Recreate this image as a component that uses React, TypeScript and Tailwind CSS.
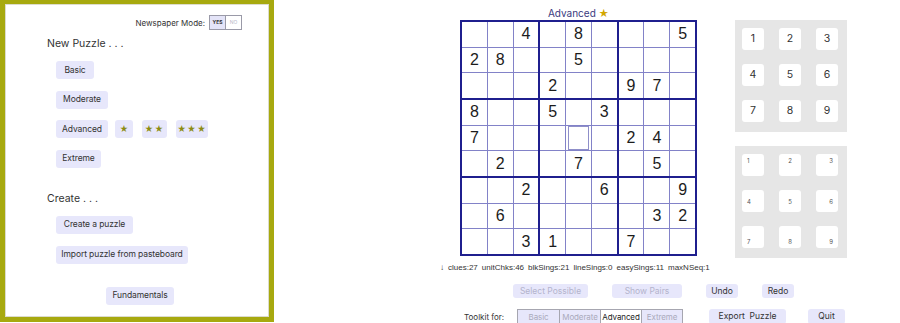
import React from "react";

const FONT = { fontFamily: "Inter, 'Liberation Sans', sans-serif" };
const ARIAL = { fontFamily: "'Liberation Sans', Arial, sans-serif" };

const PUZZLE: string[] = [
  "..4.8...5",
  "28..5....",
  "...2..97.",
  "8..5.3...",
  "7.....24.",
  ".2..7..5.",
  "..2..6..9",
  ".6.....32",
  "..31..7..",
];

const SEL_ROW = 4;
const SEL_COL = 4;

function PillButton({ w, children, dim = false }: { w: string; children: React.ReactNode; dim?: boolean }) {
  return (
    <div
      className={`${w} h-[18px] shrink-0 rounded-[3px] bg-[#e7e7fb] flex items-center justify-center whitespace-nowrap text-[8.5px] tracking-[-0.1px] ${
        dim ? "text-[#b3b3c9]" : "text-[#333]"
      }`}
    >
      {children}
    </div>
  );
}

function LeftPanel() {
  return (
    <div className="w-[274px] h-[322px] shrink-0 border-[5px] border-t-4 border-[#a7a90f] bg-white shadow-[inset_0_0_0_1px_#dcdccc] flex flex-col">
      <div className="flex justify-end items-center pr-[27px] mt-[11px] gap-[4px]">
        <span className="text-[8px] text-[#333]">Newspaper Mode:</span>
        <div className="flex h-[15px] border border-[#9a9aa8]">
          <div className="w-[16px] bg-[#e4e4f8] border-r border-[#9a9aa8] flex items-center justify-center text-[5px] font-bold text-[#333]">YES</div>
          <div className="w-[15px] bg-white flex items-center justify-center text-[5px] text-[#b8b8c8]">NO</div>
        </div>
      </div>

      <div className="pl-[42px] mt-[7px] text-[10.5px] leading-[13px] text-[#333]">New Puzzle . . .</div>

      <div className="pl-[51px] mt-[11px] flex flex-col gap-[11.5px]">
        <PillButton w="w-[38px]">Basic</PillButton>
        <PillButton w="w-[52px]">Moderate</PillButton>
        <div className="flex">
          <PillButton w="w-[52px]">Advanced</PillButton>
          <div className="ml-[7px]">
            <PillButton w="w-[18px]"><span className="text-[#8c8c12]">★</span></PillButton>
          </div>
          <div className="ml-[9px]">
            <PillButton w="w-[25px]"><span className="text-[#8c8c12] tracking-[1px]">★★</span></PillButton>
          </div>
          <div className="ml-[9px]">
            <PillButton w="w-[32px]"><span className="text-[#8c8c12] tracking-[1px]">★★★</span></PillButton>
          </div>
        </div>
        <PillButton w="w-[45px]">Extreme</PillButton>
      </div>

      <div className="pl-[42px] mt-[24px] text-[10.5px] leading-[13px] text-[#333]">Create . . .</div>

      <div className="pl-[51px] mt-[11px] flex flex-col gap-[12px]">
        <PillButton w="w-[77px]">Create a puzzle</PillButton>
        <PillButton w="w-[132px]">Import puzzle from pasteboard</PillButton>
      </div>

      <div className="pl-[101px] mt-[23px]">
        <PillButton w="w-[68px]">Fundamentals</PillButton>
      </div>
    </div>
  );
}

function SudokuGrid() {
  const boxes = Array.from({ length: 9 }, (_, b) => b);
  return (
    <div className="w-[237px] h-[236px] bg-[#1f1f8e] p-[2px] grid grid-cols-3 grid-rows-3 gap-[2px]">
      {boxes.map((b) => {
        const br = Math.floor(b / 3);
        const bc = b % 3;
        return (
          <div key={b} className="bg-[#8282c8] grid grid-cols-3 grid-rows-3 gap-px">
            {Array.from({ length: 9 }, (_, i) => {
              const r = br * 3 + Math.floor(i / 3);
              const c = bc * 3 + (i % 3);
              const ch = PUZZLE[r][c];
              const sel = r === SEL_ROW && c === SEL_COL;
              return (
                <div
                  key={i}
                  className="bg-white flex items-center justify-center text-[16px] text-[#1c1c1c]"
                  style={ARIAL}
                >
                  {sel ? (
                    <div className="w-full h-full m-[2px] border border-[#8f8fc9]" />
                  ) : ch !== "." ? (
                    ch
                  ) : null}
                </div>
              );
            })}
          </div>
        );
      })}
    </div>
  );
}

const CORNER_POS = [
  "items-start justify-start",
  "items-start justify-center",
  "items-start justify-end",
  "items-center justify-start",
  "items-center justify-center",
  "items-center justify-end",
  "items-end justify-start",
  "items-end justify-center",
  "items-end justify-end",
];

function Keypad({ small = false }: { small?: boolean }) {
  return (
    <div className="w-[112px] h-[112px] bg-[#e6e6e6] pl-[7px] pt-[8px] grid grid-cols-[22px_22px_22px] grid-rows-[22px_22px_22px] gap-x-[15px] gap-y-[14px]">
      {[1, 2, 3, 4, 5, 6, 7, 8, 9].map((n) => (
        <div
          key={n}
          className={`bg-white rounded-[3px] flex ${
            small ? `${CORNER_POS[n - 1]} px-[5px] py-[2px] text-[6px] text-[#555]` : "items-center justify-center text-[10.5px] text-[#333]"
          }`}
        >
          {n}
        </div>
      ))}
    </div>
  );
}

function SmallButton({ w, children, dim = false }: { w: string; children: React.ReactNode; dim?: boolean }) {
  return (
    <div
      className={`${w} h-[14px] shrink-0 rounded-[3px] bg-[#e7e7fb] flex items-center justify-center whitespace-nowrap text-[8.5px] ${
        dim ? "text-[#b4b4cc]" : "text-[#333]"
      }`}
    >
      {children}
    </div>
  );
}

function Workspace() {
  const stats = ["clues:27", "unitChks:46", "blkSings:21", "lineSings:0", "easySings:11", "maxNSeq:1"];
  const levels = ["Basic", "Moderate", "Advanced", "Extreme"];
  return (
    <div className="flex-1 flex flex-col">
      <div className="flex items-start">
        <div className="ml-[186px] flex flex-col">
          <div className="h-[20px] pt-[7px] text-[10px] leading-[13px] text-center text-[#3a3a80]">
            Advanced <span className="text-[#d3a700]">★</span>
          </div>
          <SudokuGrid />
        </div>
        <div className="ml-[38px] pt-[20px] flex flex-col gap-[14px]">
          <Keypad />
          <Keypad small />
        </div>
      </div>

      <div
        className="ml-[166px] mt-[5px] h-[10px] flex items-center gap-[4px] text-[8px] leading-[10px] text-[#333]"
        style={ARIAL}
      >
        <span>↓</span>
        {stats.map((s) => (
          <span key={s}>{s}</span>
        ))}
      </div>

      <div className="ml-[239px] mt-[11px] flex items-center gap-[24px]">
        <SmallButton w="w-[75px]" dim>Select Possible</SmallButton>
        <SmallButton w="w-[70px]" dim>Show Pairs</SmallButton>
        <SmallButton w="w-[32px]">Undo</SmallButton>
        <SmallButton w="w-[32px]">Redo</SmallButton>
      </div>

      <div className="ml-[190px] mt-[11px] flex items-center">
        <span className="w-[40px] text-[8px] text-[#333] whitespace-nowrap">Toolkit for:</span>
        <div className="ml-[13px] flex h-[15px] border border-[#a6a6b0]">
          {levels.map((l, i) => (
            <div
              key={l}
              className={`w-[41px] flex items-center justify-center text-[8px] tracking-[-0.1px] ${i > 0 ? "border-l border-[#a6a6b0]" : ""} ${
                l === "Advanced" ? "bg-white text-[#222]" : "bg-[#e7e7fb] text-[#aaaabb]"
              }`}
            >
              {l}
            </div>
          ))}
        </div>
        <div className="ml-[26px] w-[77px] h-[15px] rounded-[3px] bg-[#e7e7fb] flex items-center justify-center text-[8.5px] text-[#333] whitespace-pre">
          Export  Puzzle
        </div>
        <div className="ml-[22px] w-[37px] h-[15px] rounded-[3px] bg-[#e7e7fb] flex items-center justify-center text-[8.5px] text-[#333]">
          Quit
        </div>
      </div>
    </div>
  );
}

export default function App() {
  return (
    <div className="w-[900px] h-[323px] bg-white flex overflow-hidden" style={FONT}>
      <LeftPanel />
      <Workspace />
    </div>
  );
}
